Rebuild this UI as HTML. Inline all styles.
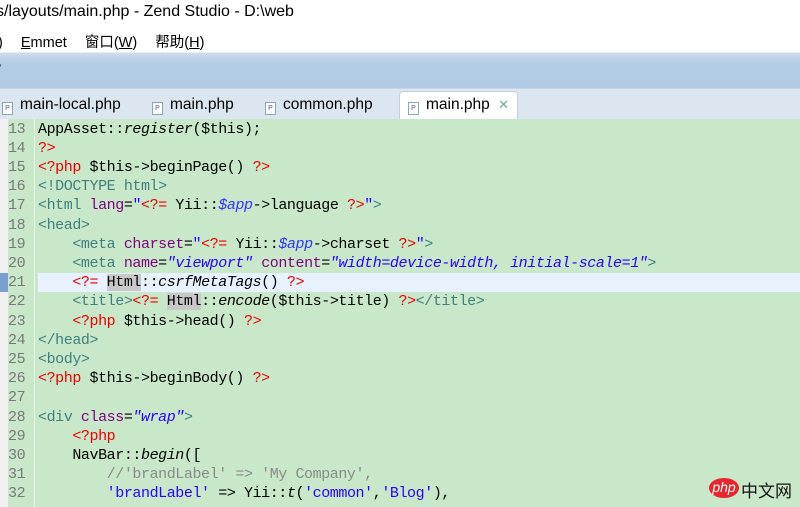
<!DOCTYPE html>
<html><head><meta charset="utf-8"><style>
body{margin:0;width:800px;height:507px;overflow:hidden;background:#fff;font-family:"Liberation Sans","Noto Sans CJK SC",sans-serif;position:relative}
.title{position:absolute;left:-4px;top:3px;font-size:16px;color:#000}
.menu{position:absolute;left:-2px;top:31px;font-size:14.5px;color:#000}
.menu span{margin-right:14px}
.bar{position:absolute;left:0;top:52px;width:800px;height:36px;background:linear-gradient(#cddcec,#b3cce6 30%,#b2cbe4);border-top:1px solid #e6edf5}
.bar2{position:absolute;left:0;top:88px;width:800px;height:30px;background:#dce6f1;border-top:1px solid #c8d4e2}
.tab{position:absolute;top:94px;font-size:15.5px;color:#000;height:24px;line-height:22px}
.tab i{display:inline-block;width:9px;height:11px;border:1px solid #8aa;background:#fff;margin-right:7px;vertical-align:-1px;font-style:normal;font-size:7px;line-height:11px;text-align:center;color:#558}
.act{background:#fff;border:1px solid #c5d0dc;border-bottom:none;border-radius:4px 4px 0 0;padding:0 8px 0 8px;top:91px;height:27px;line-height:26px}
.ed{position:absolute;left:0;top:119px;width:800px;height:388px;background:#c9e8ca}
.gut{position:absolute;left:0;top:119px;width:8px;height:388px;background:#f0f0f0}
.gl{position:absolute;left:34px;top:119px;width:1px;height:388px;background:#eaf5ea}
.ln{position:absolute;left:8px;width:26px;font-family:"Liberation Mono",monospace;font-size:15px;letter-spacing:-0.42px;color:#787878;height:19px;line-height:19px}
.c{position:absolute;left:38px;font-family:"Liberation Mono",monospace;font-size:15px;letter-spacing:-0.42px;white-space:pre;height:19px;line-height:19px;color:#000}
.r{color:#e00}.t{color:#3f7f7f}.a{color:#7f007f}.s{color:#2a00ff;font-style:italic}.q{color:#2a00ff}.g{color:#8a8a8a}.it{font-style:italic}.v{color:#3333ff;font-style:italic}.h{background:#c8c8c8}
.cur{position:absolute;left:38px;top:273px;width:762px;height:19px;background:#e8f2fe}
</style></head><body>
<div class="title">s/layouts/main.php - Zend Studio - D:\web</div>
<div class="menu"><span>)</span> <span><u>E</u>mmet</span> <span>窗口(<u>W</u>)</span> <span>帮助(<u>H</u>)</span></div>
<div class="bar"><span style="position:absolute;left:-3px;top:8px;font-size:9px;color:#555">▾</span></div>
<div class="bar2"></div>
<div class="tab" style="left:2px"><i>P</i>main-local.php</div>
<div class="tab" style="left:152px"><i>P</i>main.php</div>
<div class="tab" style="left:265px"><i>P</i>common.php</div>
<div class="tab act" style="left:399px"><i>P</i>main.php <span style="color:#7a9;font-size:13px;margin-left:4px">✕</span></div>
<div class="ed"></div><div class="gut"></div><div class="gl"></div>
<div class="cur"></div>
<div style="position:absolute;left:0;top:273px;width:8px;height:19px;background:#7aa0d0"></div>

<div class="ln" style="top:120px">13</div><div class="c" style="top:120px">AppAsset::<span class="it">register</span>($this);</div>
<div class="ln" style="top:139px">14</div><div class="c" style="top:139px"><span class="r">?&gt;</span></div>
<div class="ln" style="top:158px">15</div><div class="c" style="top:158px"><span class="r">&lt;?php</span> $this-&gt;beginPage() <span class="r">?&gt;</span></div>
<div class="ln" style="top:177px">16</div><div class="c" style="top:177px"><span class="t">&lt;!DOCTYPE html&gt;</span></div>
<div class="ln" style="top:196px">17</div><div class="c" style="top:196px"><span class="t">&lt;html</span> <span class="a">lang</span>=<span class="q">"</span><span class="r">&lt;?=</span> Yii::<span class="v">$app</span>-&gt;language <span class="r">?&gt;</span><span class="q">"</span><span class="t">&gt;</span></div>
<div class="ln" style="top:216px">18</div><div class="c" style="top:216px"><span class="t">&lt;head&gt;</span></div>
<div class="ln" style="top:235px">19</div><div class="c" style="top:235px">    <span class="t">&lt;meta</span> <span class="a">charset</span>=<span class="q">"</span><span class="r">&lt;?=</span> Yii::<span class="v">$app</span>-&gt;charset <span class="r">?&gt;</span><span class="q">"</span><span class="t">&gt;</span></div>
<div class="ln" style="top:254px">20</div><div class="c" style="top:254px">    <span class="t">&lt;meta</span> <span class="a">name</span>=<span class="s">"viewport"</span> <span class="a">content</span>=<span class="s">"width=device-width, initial-scale=1"</span><span class="t">&gt;</span></div>
<div class="ln" style="top:273px">21</div><div class="c" style="top:273px">    <span class="r">&lt;?=</span> <span class="h">Html</span>::<span class="it">csrfMetaTags</span>() <span class="r">?&gt;</span></div>
<div class="ln" style="top:292px">22</div><div class="c" style="top:292px">    <span class="t">&lt;title&gt;</span><span class="r">&lt;?=</span> <span class="h">Html</span>::<span class="it">encode</span>($this-&gt;title) <span class="r">?&gt;</span><span class="t">&lt;/title&gt;</span></div>
<div class="ln" style="top:312px">23</div><div class="c" style="top:312px">    <span class="r">&lt;?php</span> $this-&gt;head() <span class="r">?&gt;</span></div>
<div class="ln" style="top:331px">24</div><div class="c" style="top:331px"><span class="t">&lt;/head&gt;</span></div>
<div class="ln" style="top:350px">25</div><div class="c" style="top:350px"><span class="t">&lt;body&gt;</span></div>
<div class="ln" style="top:369px">26</div><div class="c" style="top:369px"><span class="r">&lt;?php</span> $this-&gt;beginBody() <span class="r">?&gt;</span></div>
<div class="ln" style="top:388px">27</div>
<div class="ln" style="top:408px">28</div><div class="c" style="top:408px"><span class="t">&lt;div</span> <span class="a">class</span>=<span class="s">"wrap"</span><span class="t">&gt;</span></div>
<div class="ln" style="top:427px">29</div><div class="c" style="top:427px">    <span class="r">&lt;?php</span></div>
<div class="ln" style="top:446px">30</div><div class="c" style="top:446px">    NavBar::<span class="it">begin</span>([</div>
<div class="ln" style="top:465px">31</div><div class="c" style="top:465px">        <span class="g">//'brandLabel' =&gt; 'My Company',</span></div>
<div class="ln" style="top:484px">32</div><div class="c" style="top:484px">        <span class="q">'brandLabel'</span> =&gt; Yii::<span class="it">t</span>(<span class="q">'common'</span>,<span class="q">'Blog'</span>),</div>

<div style="position:absolute;left:709px;top:478px;width:30px;height:20px;border-radius:50%;background:#e8262b;color:#fff;font-size:14px;font-style:italic;text-align:center;line-height:19px">php</div>
<div style="position:absolute;left:741px;top:477px;font-size:17px;color:#111">中文网</div>
</body></html>
